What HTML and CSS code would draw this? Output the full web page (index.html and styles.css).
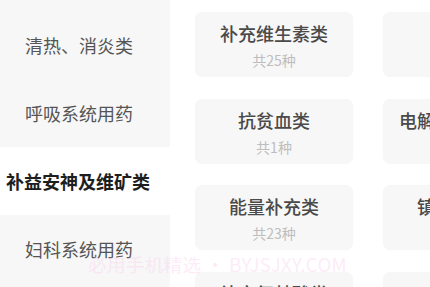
FILE: index.html
```html
<!DOCTYPE html>
<html lang="zh-CN">
<head>
<meta charset="utf-8">
<link rel="stylesheet" href="styles.css">
</head>
<body>
<div class="page">
  <aside class="sidebar">
    <div class="side-item">清热、消炎类</div>
    <div class="side-item">呼吸系统用药</div>
    <div class="side-item active">补益安神及维矿类</div>
    <div class="side-item">妇科系统用药</div>
  </aside>
  <main class="content">
    <div class="grid">
      <div class="card"><div class="title">补充维生素类</div><div class="count">共25种</div></div>
      <div class="card"><div class="title">补钙类</div><div class="count">共18种</div></div>
      <div class="card"><div class="title">抗贫血类</div><div class="count">共1种</div></div>
      <div class="card"><div class="title">电解质平衡调节</div><div class="count">共6种</div></div>
      <div class="card"><div class="title">能量补充类</div><div class="count">共23种</div></div>
      <div class="card"><div class="title">镇静安神类</div><div class="count">共9种</div></div>
      <div class="card"><div class="title">补充氨基酸类</div><div class="count">共4种</div></div>
      <div class="card"><div class="title">补锌类</div><div class="count">共3种</div></div>
    </div>
  </main>
  <div class="watermark">必用手机精选 • BYJSJXY.COM</div>
</div>
</body>
</html>
```

FILE: styles.css
```css
html, body {
  margin: 0;
  padding: 0;
  background: #ffffff;
  overflow: hidden;
}
body {
  font-family: "Noto Sans CJK SC", "Noto Sans", sans-serif;
}
.page {
  position: relative;
  display: flex;
  width: 430px;
  height: 287px;
  overflow: hidden;
}
.sidebar {
  flex: 0 0 170px;
  background: #f7f7f7;
  padding-top: 11px;
  box-sizing: border-box;
}
.side-item {
  height: 68px;
  display: flex;
  align-items: center;
  justify-content: center;
  padding-right: 12px;
  font-size: 18px;
  color: #555555;
  white-space: nowrap;
}
.side-item.active {
  background: #ffffff;
  color: #1e1e1e;
  font-weight: 700;
  font-size: 18px;
  padding-right: 14px;
}
.content {
  flex: 1;
  padding: 12px 0 0 25px;
  min-width: 0;
}
.grid {
  display: grid;
  grid-template-columns: 158px 158px;
  column-gap: 30px;
  row-gap: 21.7px;
}
.card {
  height: 65px;
  border-radius: 8px;
  background: #f7f7f7;
  box-shadow: 0 0 1px rgba(0, 0, 0, 0.06);
  display: flex;
  flex-direction: column;
  align-items: center;
  padding-top: 8px;
  box-sizing: border-box;
}
.title {
  font-size: 18px;
  line-height: 26px;
  color: #4a4a4a;
  font-weight: 500;
  white-space: nowrap;
}
.count {
  font-size: 14px;
  line-height: 20px;
  margin-top: 4px;
  color: #bdbdbd;
  white-space: nowrap;
}
.watermark {
  position: absolute;
  left: 88px;
  top: 252px;
  font-size: 18.6px;
  line-height: 24px;
  letter-spacing: 0.3px;
  color: rgba(250, 205, 238, 0.4);
  white-space: nowrap;
}
```
